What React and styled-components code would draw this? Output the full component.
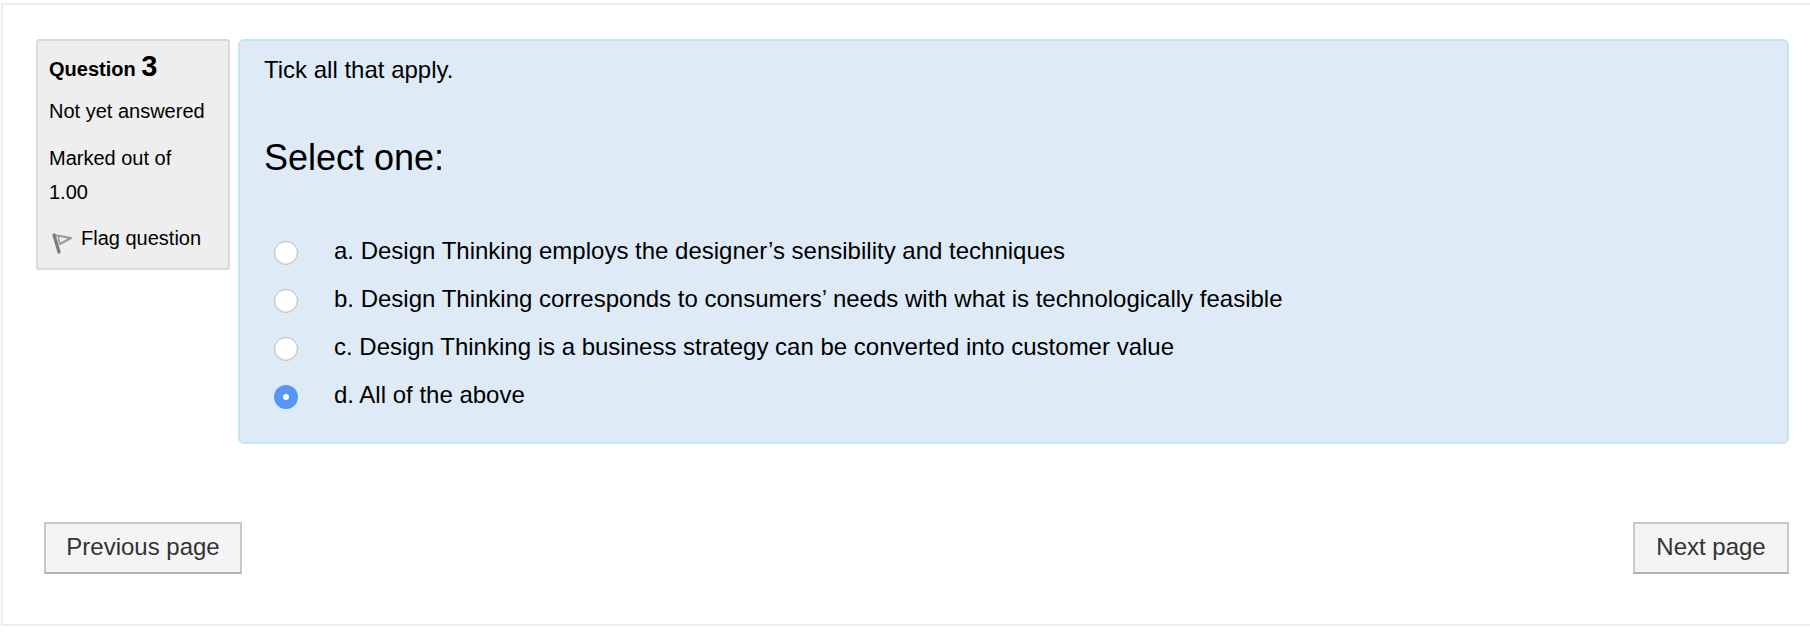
import React from "react";
import styled, { createGlobalStyle } from "styled-components";

const GlobalStyle = createGlobalStyle`
  html, body {
    margin: 0;
    padding: 0;
    background: #fff;
  }
  body {
    font-family: "Liberation Sans", Arial, sans-serif;
    color: #000;
  }
`;

const options = [
  { id: "a", text: "a. Design Thinking employs the designer’s sensibility and techniques" },
  { id: "b", text: "b. Design Thinking corresponds to consumers’ needs with what is technologically feasible" },
  { id: "c", text: "c. Design Thinking is a business strategy can be converted into customer value" },
  { id: "d", text: "d. All of the above", checked: true },
];

const App = () => {
  return (
    <>
      <GlobalStyle />
      <Page>
        <Frame>
          <Question>
            <Info>
              <QuestionNo>
                Question <Number>3</Number>
              </QuestionNo>
              <State>Not yet answered</State>
              <Grade>Marked out of 1.00</Grade>
              <Flag>
                <FlagIcon viewBox="0 0 22 22" aria-hidden="true">
                  <path d="M3 3 L20 6 L9 12" fill="none" stroke="#9a9a9a" strokeWidth="2" strokeLinejoin="round" />
                  <path d="M3 3 L8 20" fill="none" stroke="#7c7c7c" strokeWidth="3.2" strokeLinecap="round" />
                  <path d="M7 4 L9 13" fill="none" stroke="#a0a0a0" strokeWidth="1.6" />
                </FlagIcon>
                Flag question
              </Flag>
            </Info>
            <Content>
              <Prompt>Tick all that apply.</Prompt>
              <Legend>Select one:</Legend>
              <Answers>
                {options.map((option) => (
                  <Answer key={option.id}>
                    <Radio $checked={option.checked} />
                    <span>{option.text}</span>
                  </Answer>
                ))}
              </Answers>
            </Content>
          </Question>
          <Nav>
            <NavButton $width={198}>Previous page</NavButton>
            <NavButton $width={156}>Next page</NavButton>
          </Nav>
        </Frame>
      </Page>
    </>
  );
};

const Page = styled.div`
  width: 1810px;
  height: 638px;
  padding-top: 3px;
  padding-left: 1px;
  box-sizing: border-box;
  overflow: hidden;
`;
const Frame = styled.div`
  height: 623px;
  box-sizing: border-box;
  border: 2px solid #eeeeee;
  border-right: 0;
  padding: 34px 21px 0 33px;
`;
const Question = styled.div`
  display: flex;
  align-items: flex-start;
  gap: 8px;
`;
const Info = styled.div`
  width: 194px;
  height: 231px;
  box-sizing: border-box;
  padding: 8px 14px 0 11px;
  background: #eeeeee;
  border: 2px solid #dadada;
  border-radius: 3px;
  font-size: 20px;
`;
const QuestionNo = styled.div`
  font-weight: 700;
  line-height: 34px;
  font-size: 20px;
`;
const Number = styled.span`
  font-size: 29px;
`;
const State = styled.div`
  margin-top: 8px;
  line-height: 34px;
`;
const Grade = styled.div`
  width: 150px;
  margin-top: 13px;
  line-height: 34px;
`;
const Flag = styled.div`
  display: flex;
  align-items: flex-start;
  gap: 8px;
  margin-top: 15px;
  line-height: 28px;
`;
const FlagIcon = styled.svg`
  width: 22px;
  height: 22px;
  margin-top: 8px;
  margin-left: 2px;
  flex: none;
`;
const Content = styled.div`
  flex: 1;
  height: 405px;
  box-sizing: border-box;
  padding: 12px 62px 0 24px;
  background: #deebf6;
  border: 2px solid #c5e6f0;
  border-radius: 6px;
`;
const Prompt = styled.div`
  font-size: 24px;
  line-height: 34px;
`;
const Legend = styled.div`
  margin-top: 49px;
  padding-bottom: 12px;
  font-size: 36px;
  line-height: 44px;
  border-bottom: 1px solid #e4edf3;
`;
const Answers = styled.div`
  margin-top: 34px;
  display: flex;
  flex-direction: column;
`;
const Answer = styled.div`
  display: flex;
  align-items: center;
  height: 48px;
  font-size: 24px;
  white-space: nowrap;
`;
const Radio = styled.span`
  width: 24px;
  height: 24px;
  margin: 4px 36px 0 10px;
  box-sizing: border-box;
  border-radius: 50%;
  flex: none;
  display: flex;
  align-items: center;
  justify-content: center;
  background: ${(p) => (p.$checked ? "#5596f6" : "#fff")};
  border: ${(p) => (p.$checked ? "0" : "1px solid #bdbdbd")};
  box-shadow: ${(p) => (p.$checked ? "none" : "inset 0 -1px 1px #e2e2e2")};
  &::after {
    content: "";
    display: ${(p) => (p.$checked ? "block" : "none")};
    width: 6px;
    height: 6px;
    border-radius: 50%;
    background: #fff;
  }
`;
const Nav = styled.div`
  display: flex;
  justify-content: space-between;
  margin-top: 78px;
  padding-left: 8px;
`;
const NavButton = styled.div`
  width: ${(p) => p.$width}px;
  height: 52px;
  box-sizing: border-box;
  padding-bottom: 2px;
  display: flex;
  align-items: center;
  justify-content: center;
  font-size: 24px;
  color: #333;
  background: #f4f4f4;
  border: 2px solid #c8c8c8;
  border-bottom-color: #b2b2b2;
`;

export default App;
